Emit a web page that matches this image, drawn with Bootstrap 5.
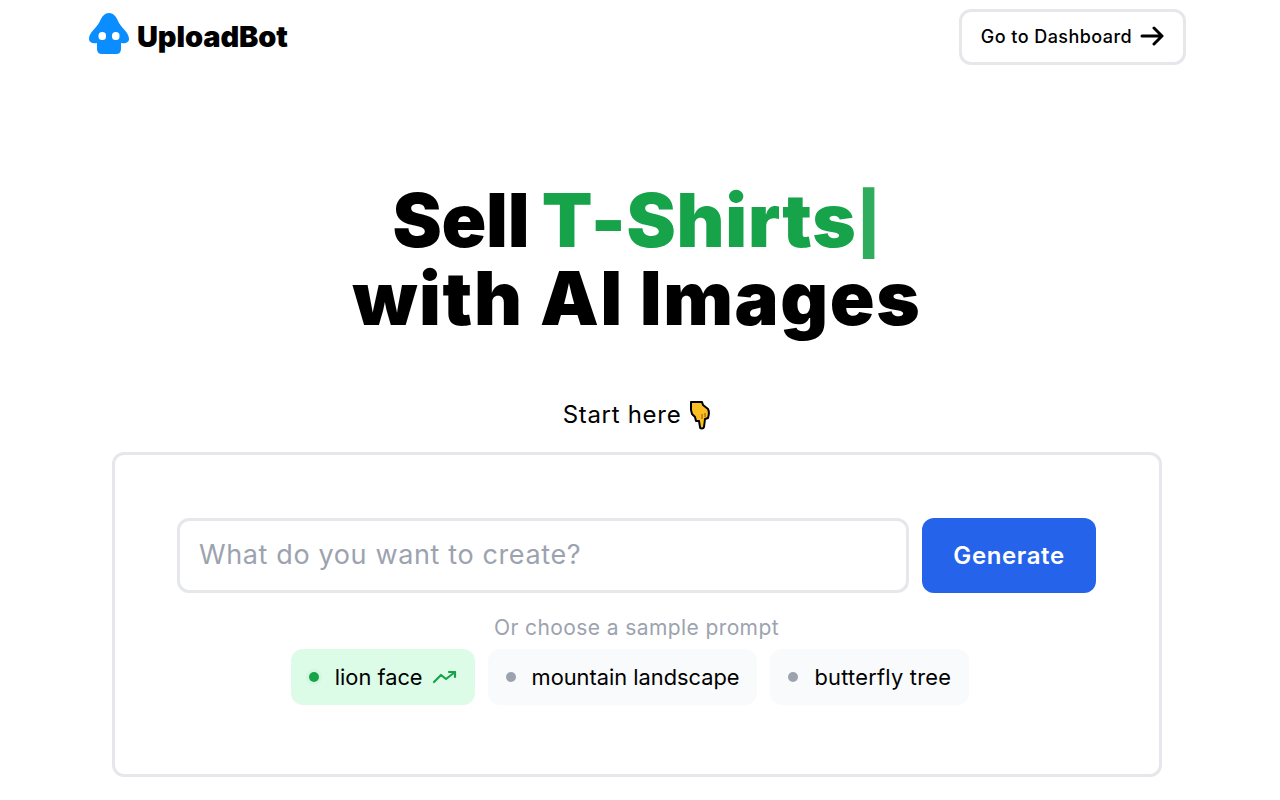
<!DOCTYPE html>
<html lang="en">
<head>
    <meta charset="UTF-8">
    <title>UploadBot</title>
    <link href="https://cdn.jsdelivr.net/npm/bootstrap@5.3.2/dist/css/bootstrap.min.css" rel="stylesheet">
    <style>
        body {
            font-family: Inter, "Liberation Sans", sans-serif;
            color: #000;
            background: #fff;
        }
        .top-bar {
            padding: 9px 94px 0 89px;
        }
        .brand-link {
            height: 50px;
        }
        .brand-name {
            font-size: 29px;
            font-weight: 900;
            letter-spacing: -0.1px;
            line-height: 1;
            color: #000;
        }
        .dash-btn {
            width: 227px;
            height: 56px;
            padding-bottom: 2px;
            border: 3px solid #e5e7eb;
            border-radius: 12px;
            font-size: 18px;
            font-weight: 500;
            letter-spacing: 0.45px;
            color: #000;
            background: #fff;
        }
        .page-main {
            padding-right: 6px;
        }
        .hero-title {
            font-size: 74px;
            font-weight: 900;
            line-height: 75px;
            margin: 118px 0 0;
            color: #000;
        }
        .hero-line-a {
            letter-spacing: -0.3px;
            word-spacing: -2px;
        }
        .hero-line-b {
            letter-spacing: 1.6px;
        }
        .hero-green {
            color: #16a34a;
            letter-spacing: 0.7px;
        }
        .hero-caret {
            font-size: 60px;
            color: #2fac5c;
            vertical-align: 2px;
        }
        .start-line {
            font-size: 24px;
            letter-spacing: 0.7px;
            line-height: 32px;
            margin-top: 63px;
        }
        .prompt-box {
            width: 1050px;
            height: 325px;
            margin: 21px auto 0;
            border: 3px solid #e5e7eb;
            border-radius: 12px;
            padding: 63px 63px 0 62px;
        }
        .prompt-input {
            height: 75px;
            border: 3px solid #e5e7eb;
            border-radius: 12px;
            font-size: 27px;
            letter-spacing: 0.63px;
            padding: 0 19px 2px;
            color: #000;
        }
        .prompt-input::placeholder {
            color: #9ca3af;
            opacity: 1;
        }
        .generate-btn {
            width: 174px;
            height: 75px;
            flex: none;
            background: #2563eb;
            border: 0;
            border-radius: 12px;
            font-size: 24px;
            font-weight: 600;
            letter-spacing: 0.6px;
            color: #fff;
        }
        .sample-label {
            font-size: 21px;
            letter-spacing: 0.4px;
            line-height: 28px;
            color: #9ca3af;
            margin-top: 21px;
        }
        .sample-row {
            gap: 13px;
            margin-top: 7px;
            padding-right: 13px;
        }
        .sample-chip {
            height: 56px;
            padding: 0 18px;
            border-radius: 12px;
            background: #f9fafb;
            font-size: 21.800px;
            color: #000;
            gap: 16px;
        }
        .sample-chip.is-hot {
            background: #dcfce7;
        }
        .sample-chip.is-long {
            letter-spacing: 0.25px;
        }
        .chip-dot {
            width: 10px;
            height: 10px;
            border-radius: 50%;
            background: #9ca3af;
        }
        .is-hot .chip-dot {
            background: #16a34a;
            box-shadow: 0 0 0 3px #d4f7df;
        }
        .trend-icon {
            margin-left: -6px;
        }
    </style>
</head>
<body>
<header class="top-bar d-flex justify-content-between align-items-start">
    <a href="#" class="brand-link d-flex align-items-center gap-2 text-decoration-none">
        <svg width="40" height="42" viewBox="0 0 40 42">
            <path d="M20 0C16 0 13 3 11 8C8 15 0 19 0 26C0 29 3 31 8 30C8 36 7 41 13 41L27 41C33 41 32 36 32 30C37 31 40 29 40 26C40 19 32 15 29 8C27 3 24 0 20 0Z" fill="#0a8dff"/>
            <rect x="9.500" y="19" width="7.500" height="8" rx="3.500" fill="#fff"/>
            <rect x="23" y="19" width="7.500" height="8" rx="3.500" fill="#fff"/>
        </svg>
        <span class="brand-name mt-1">UploadBot</span>
    </a>
    <a href="#" class="dash-btn d-flex align-items-center justify-content-center gap-2 text-decoration-none">
        Go to Dashboard
        <svg width="24" height="24" viewBox="0 0 24 24" fill="none" stroke="#000" stroke-width="3" stroke-linecap="round" stroke-linejoin="round">
            <path d="M2 12H22M14 4L22 12L14 20"/>
        </svg>
    </a>
</header>

<main class="page-main text-center">
    <h1 class="hero-title"><span class="hero-line-a">Sell <span class="hero-green">T-Shirts<span class="hero-caret">|</span></span></span><br><span class="hero-line-b">with AI Images</span></h1>
    <div class="start-line d-flex justify-content-center align-items-center gap-2">
        Start here
        <svg width="22" height="30" viewBox="0 0 22 30">
            <path d="M2 2H13L14 5L19 9C20 11 20 15 19 18L16 19L15 27C14.500 29 11 29 11 27L10 21H7L6 17L3 14L2 10Z" fill="#fbbf24" stroke="#000" stroke-width="2" stroke-linejoin="round"/>
            <path d="M13 14V19M16 13V17" stroke="#b97a10" stroke-width="1.500"/>
        </svg>
    </div>

    <section class="prompt-box">
        <form class="d-flex" style="gap:13px" onsubmit="return false">
            <input class="form-control prompt-input shadow-none" type="text" placeholder="What do you want to create?">
            <button class="btn generate-btn" type="submit">Generate</button>
        </form>
        <div class="sample-label">Or choose a sample prompt</div>
        <div class="sample-row d-flex justify-content-center">
            <div class="sample-chip is-hot d-inline-flex align-items-center">
                <span class="chip-dot"></span>
                <span>lion face</span>
                <svg class="trend-icon" width="24" height="14" viewBox="0 0 24 14" fill="none" stroke="#16a34a" stroke-width="2.200" stroke-linecap="round" stroke-linejoin="round">
                    <path d="M1 12L8 5L13 9L22 2M16 2H22V7"/>
                </svg>
            </div>
            <div class="sample-chip d-inline-flex align-items-center">
                <span class="chip-dot"></span>
                <span>mountain landscape</span>
            </div>
            <div class="sample-chip is-long d-inline-flex align-items-center">
                <span class="chip-dot"></span>
                <span>butterfly tree</span>
            </div>
        </div>
    </section>
</main>
<script src="https://cdn.jsdelivr.net/npm/bootstrap@5.3.2/dist/js/bootstrap.bundle.min.js"></script>
</body>
</html>
